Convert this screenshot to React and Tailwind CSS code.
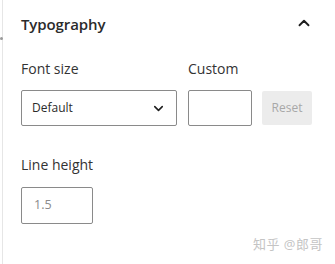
import { ChevronUp, ChevronDown } from "lucide-react";

export default function App() {
  return (
    <div
      className="w-[335px] h-[264px] bg-white flex overflow-hidden"
      style={{ fontFamily: '"Open Sans", "Noto Sans CJK SC", sans-serif' }}
    >
      {/* left panel edge */}
      <div className="ml-[2px] w-[2px] bg-[#e6e6e6] relative">
        <span className="absolute -left-[2px] top-[37px] w-[3px] h-[3px] rounded-full bg-[#9a9a9a]" />
      </div>

      <div className="flex-1 flex flex-col pl-[18px] pr-[23px]">
        {/* header */}
        <div className="flex items-center justify-between h-[46px] pt-[2px]">
          <h2 className="text-[15px] font-semibold text-[#2b2b2b] tracking-[-0.1px]">
            Typography
          </h2>
          <ChevronUp className="w-[18px] h-[18px] text-[#1e1e1e] -mr-[1px] -mt-[3px]" strokeWidth={2.5} />
        </div>

        {/* font size row */}
        <div className="flex mt-[14px]">
          <div className="flex flex-col w-[156px]">
            <label className="text-[14px] leading-[18px] text-[#333]">Font size</label>
            <div className="mt-[12px] h-[36px] border border-[#8a8a8a] rounded-[2px] flex items-center justify-between pl-[10px] pr-[10px]">
              <span className="text-[12px] text-[#2b2b2b]">Default</span>
              <ChevronDown className="w-[15px] h-[15px] text-[#1e1e1e]" strokeWidth={2.5} />
            </div>
          </div>
          <div className="flex flex-col ml-[11px] w-[64px]">
            <label className="text-[14px] leading-[18px] text-[#333]">Custom</label>
            <div className="mt-[12px] h-[36px] border border-[#8a8a8a] rounded-[2px]" />
          </div>
          <div className="flex flex-col justify-end ml-[10px]">
            <button className="w-[50px] h-[34px] mb-[1px] bg-[#ececec] text-[12px] text-[#a8a8a8] rounded-[2px]">
              Reset
            </button>
          </div>
        </div>

        {/* line height */}
        <div className="flex flex-col mt-[30px]">
          <label className="text-[14px] leading-[18px] text-[#333]">Line height</label>
          <div className="mt-[13px] w-[72px] h-[37px] border border-[#8a8a8a] rounded-[2px] flex items-center pl-[12px]">
            <span className="text-[12.5px] text-[#8a8a8a]">1.5</span>
          </div>
        </div>

        <div className="flex-1" />
        <div className="self-end -mr-[11px] mb-[10px] text-[13px] text-[#c4c4c4] tracking-[0.5px]">
          知乎 @郎哥
        </div>
      </div>
    </div>
  );
}
